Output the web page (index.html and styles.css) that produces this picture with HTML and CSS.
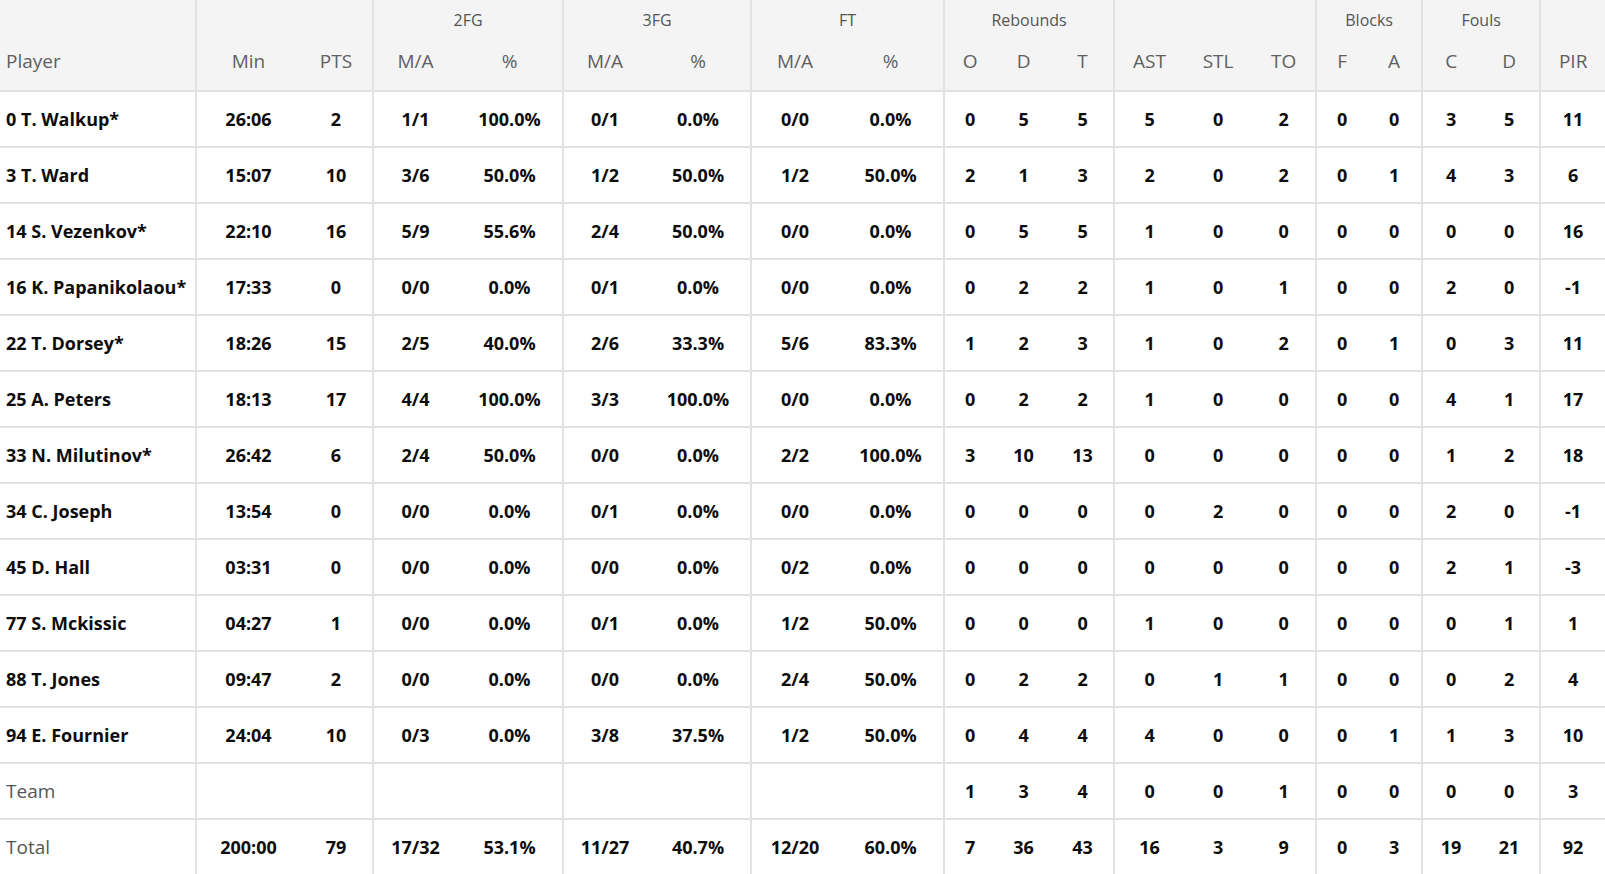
FILE: index.html
```html
<!DOCTYPE html>
<html lang="en">
<head>
<meta charset="utf-8">
<title>Box score</title>
<link rel="stylesheet" href="styles.css">
</head>
<body>
<table class="box">
  <colgroup>
    <col class="c195"><col class="c105"><col class="c72">
    <col class="c85"><col class="c105">
    <col class="c84"><col class="c104">
    <col class="c88"><col class="c105">
    <col class="c52"><col class="c57"><col class="c61">
    <col class="c71"><col class="c68"><col class="c63">
    <col class="c52"><col class="c54">
    <col class="c58"><col class="c60">
    <col class="c66">
  </colgroup>
  <thead>
    <tr class="grp">
      <th></th>
      <th class="g" colspan="2"></th>
      <th class="g" colspan="2">2FG</th>
      <th class="g" colspan="2">3FG</th>
      <th class="g" colspan="2">FT</th>
      <th class="g" colspan="3">Rebounds</th>
      <th class="g" colspan="3"></th>
      <th class="g" colspan="2">Blocks</th>
      <th class="g" colspan="2">Fouls</th>
      <th class="g"></th>
    </tr>
    <tr class="sub">
      <th class="name">Player</th>
      <th class="g">Min</th><th>PTS</th>
      <th class="g">M/A</th><th>%</th>
      <th class="g">M/A</th><th>%</th>
      <th class="g">M/A</th><th>%</th>
      <th class="g">O</th><th>D</th><th>T</th>
      <th class="g">AST</th><th>STL</th><th>TO</th>
      <th class="g">F</th><th>A</th>
      <th class="g">C</th><th>D</th>
      <th class="g">PIR</th>
    </tr>
  </thead>
  <tbody id="rows"></tbody>
</table>
<script src="app.js"></script>
</body>
</html>
```
FILE: styles.css
```css
html, body {
  margin: 0;
  padding: 0;
  background: #ffffff;
}
body {
  font-family: "Open Sans", "Noto Sans", sans-serif;
  color: #111111;
}
.box {
  border-collapse: separate;
  border-spacing: 0;
  table-layout: fixed;
  width: 1605px;
}
.c195 { width: 195px; }
.c105 { width: 105px; }
.c72 { width: 72px; }
.c85 { width: 85px; }
.c84 { width: 84px; }
.c104 { width: 104px; }
.c88 { width: 88px; }
.c52 { width: 52px; }
.c57 { width: 57px; }
.c61 { width: 61px; }
.c71 { width: 71px; }
.c68 { width: 68px; }
.c63 { width: 63px; }
.c54 { width: 54px; }
.c58 { width: 58px; }
.c60 { width: 60px; }
.c66 { width: 66px; }

.box th, .box td {
  padding: 0;
  text-align: center;
  vertical-align: middle;
  white-space: nowrap;
  overflow: hidden;
}
.box thead th {
  background: #f4f4f4;
  font-weight: 400;
}
.grp th {
  height: 40px;
  box-sizing: border-box;
  font-size: 16px;
  color: #555555;
}
.sub th {
  height: 52px;
  box-sizing: border-box;
  font-size: 19px;
  color: #606060;
  padding-bottom: 9px;
  border-bottom: 2px solid #e2e2e2;
}
.box .g {
  border-left: 2px solid #e2e2e2;
}
.box td {
  height: 56px;
  box-sizing: border-box;
  font-size: 18px;
  font-weight: 700;
  color: #0d0d0d;
  border-bottom: 2px solid #e2e2e2;
}
.box .name {
  text-align: left;
  padding-left: 6px;
}
.box td.label {
  font-weight: 400;
  font-size: 19px;
  color: #555555;
}
```
FILE: app.js
```js
var data = [
  ["0 T. Walkup*","26:06","2","1/1","100.0%","0/1","0.0%","0/0","0.0%","0","5","5","5","0","2","0","0","3","5","11"],
  ["3 T. Ward","15:07","10","3/6","50.0%","1/2","50.0%","1/2","50.0%","2","1","3","2","0","2","0","1","4","3","6"],
  ["14 S. Vezenkov*","22:10","16","5/9","55.6%","2/4","50.0%","0/0","0.0%","0","5","5","1","0","0","0","0","0","0","16"],
  ["16 K. Papanikolaou*","17:33","0","0/0","0.0%","0/1","0.0%","0/0","0.0%","0","2","2","1","0","1","0","0","2","0","-1"],
  ["22 T. Dorsey*","18:26","15","2/5","40.0%","2/6","33.3%","5/6","83.3%","1","2","3","1","0","2","0","1","0","3","11"],
  ["25 A. Peters","18:13","17","4/4","100.0%","3/3","100.0%","0/0","0.0%","0","2","2","1","0","0","0","0","4","1","17"],
  ["33 N. Milutinov*","26:42","6","2/4","50.0%","0/0","0.0%","2/2","100.0%","3","10","13","0","0","0","0","0","1","2","18"],
  ["34 C. Joseph","13:54","0","0/0","0.0%","0/1","0.0%","0/0","0.0%","0","0","0","0","2","0","0","0","2","0","-1"],
  ["45 D. Hall","03:31","0","0/0","0.0%","0/0","0.0%","0/2","0.0%","0","0","0","0","0","0","0","0","2","1","-3"],
  ["77 S. Mckissic","04:27","1","0/0","0.0%","0/1","0.0%","1/2","50.0%","0","0","0","1","0","0","0","0","0","1","1"],
  ["88 T. Jones","09:47","2","0/0","0.0%","0/0","0.0%","2/4","50.0%","0","2","2","0","1","1","0","0","0","2","4"],
  ["94 E. Fournier","24:04","10","0/3","0.0%","3/8","37.5%","1/2","50.0%","0","4","4","4","0","0","0","1","1","3","10"],
  ["Team","","","","","","","","","1","3","4","0","0","1","0","0","0","0","3"],
  ["Total","200:00","79","17/32","53.1%","11/27","40.7%","12/20","60.0%","7","36","43","16","3","9","0","3","19","21","92"]
];
var groupStarts = {1:1,3:1,5:1,7:1,9:1,12:1,15:1,17:1,19:1};
var tbody = document.getElementById("rows");
data.forEach(function (row) {
  var tr = document.createElement("tr");
  row.forEach(function (val, i) {
    var td = document.createElement("td");
    var cls = [];
    if (i === 0) {
      cls.push("name");
      if (val === "Team" || val === "Total") cls.push("label");
    }
    if (groupStarts[i]) cls.push("g");
    if (cls.length) td.className = cls.join(" ");
    td.textContent = val;
    tr.appendChild(td);
  });
  tbody.appendChild(tr);
});
```
